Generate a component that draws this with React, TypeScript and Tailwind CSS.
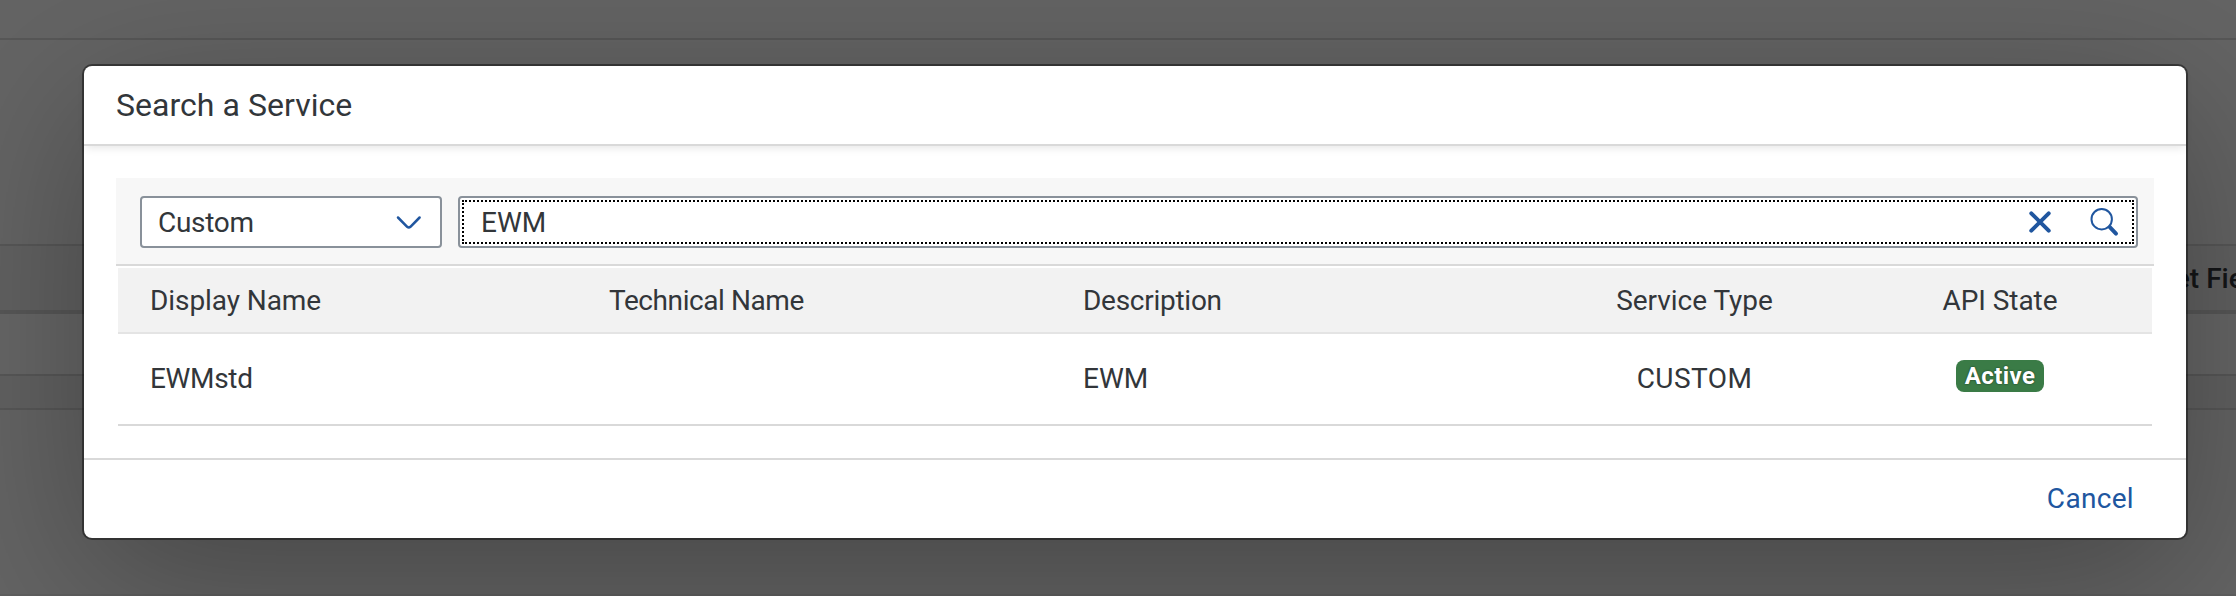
import React from "react";

function ChevronDown() {
  return (
    <svg width="28" height="20" viewBox="0 0 28 20" fill="none" stroke="#20569f" strokeWidth="2.5" strokeLinecap="round" strokeLinejoin="round">
      <path d="M3 5.5 L12.2 14.8 Q13.8 16.2 15.4 14.8 L24.6 5.5" />
    </svg>
  );
}

function ClearIcon() {
  return (
    <svg width="24" height="24" viewBox="0 0 24 24" fill="none" stroke="#20569f" strokeWidth="4" strokeLinecap="round">
      <path d="M3.3 3.3 L20.7 20.7 M20.7 3.3 L3.3 20.7" />
    </svg>
  );
}

function SearchIcon() {
  return (
    <svg width="32" height="32" viewBox="0 0 32 32" fill="none" stroke="#20569f" strokeLinecap="round">
      <circle cx="13.7" cy="13.2" r="10.2" strokeWidth="2" />
      <path d="M21.8 21.2 L28 27.6" strokeWidth="4" />
    </svg>
  );
}

function PageBehind() {
  return (
    <div className="flex h-full flex-col bg-[#fafafa]">
      <div className="h-10 border-b-2 border-[#d9d9d9]" />
      <div className="h-[206px] border-b-2 border-[#d9d9d9]" />
      <div className="flex h-[68px] items-start justify-end border-b-4 border-[#d9d9d9] bg-[#f2f2f2]">
        <div className="w-[117px] text-[28px] font-medium leading-[65px] whitespace-nowrap text-[#32363a]">
          Target Field
        </div>
      </div>
      <div className="h-[62px] border-b-2 border-[#d9d9d9] bg-white" />
      <div className="h-[34px] border-b-2 border-[#d9d9d9] bg-[#f2f2f2]" />
      <div className="h-[186px] border-b-2 border-[#ededed]" />
    </div>
  );
}

const grid = "grid grid-cols-[459px_474px_490px_307px_304px] whitespace-nowrap";

export default function App() {
  return (
    <div className="relative h-[596px] w-[2236px] overflow-hidden font-['Roboto',sans-serif] text-[28px] text-[#32363a]">
      <PageBehind />
      <div className="absolute inset-0 bg-black/60 pl-[84px] pt-[66px]">
        <section
          role="dialog"
          className="flex h-[472px] w-[2102px] flex-col rounded-lg bg-white shadow-[0_0_0_2px_rgba(0,0,0,0.42),0_40px_160px_0_rgba(0,0,0,0.3)]"
        >
          <header className="h-20 rounded-t-lg border-b-2 border-[#d9d9d9] pl-8 text-[32px] leading-[78px] tracking-[0.04px] shadow-[0_4px_8px_-2px_rgba(0,0,0,0.1)]">
            Search a Service
          </header>

          <div className="flex-1 px-8 pt-8">
            <div className="flex h-[88px] w-[2038px] gap-4 border-b-2 border-[#d9d9d9] bg-[#f7f7f7] py-[18px] pl-6 pr-4">
              <div className="flex h-[52px] w-[302px] items-center justify-between rounded-[4px] border-2 border-[#89919a] bg-white pl-4 pr-[17px]">
                <span className="self-start leading-[49px] tracking-[-0.29px]">Custom</span>
                <ChevronDown />
              </div>
              <div className="h-[52px] w-[1680px] rounded-[4px] border-2 border-[#89919a] bg-white p-[2px]">
                <div className="flex h-full items-center justify-between border-2 border-dotted border-black pl-[17px] pr-[12px]">
                  <span className="self-start leading-[41px]">EWM</span>
                  <div className="flex items-center gap-[36px]">
                    <ClearIcon />
                    <SearchIcon />
                  </div>
                </div>
              </div>
            </div>

            <div className="mx-[2px] mt-[2px] w-[2034px]">
              <div className={`${grid} h-[66px] border-b-2 border-[#e4e4e4] bg-[#f2f2f2] leading-[65px]`}>
                <div className="pl-8 tracking-[-0.08px]">Display Name</div>
                <div className="pl-8 tracking-[-0.42px]">Technical Name</div>
                <div className="pl-8 tracking-[-0.27px]">Description</div>
                <div className="text-center tracking-[-0.03px]">Service Type</div>
                <div className="text-center tracking-[-0.06px]">API State</div>
              </div>
              <div className={`${grid} h-[92px] border-b-2 border-[#d9d9d9] leading-[89px]`}>
                <div className="pl-8 tracking-[-0.32px]">EWMstd</div>
                <div className="pl-8" />
                <div className="pl-8">EWM</div>
                <div className="text-center tracking-[0.44px]">CUSTOM</div>
                <div className="flex justify-center pt-[26px]">
                  <span className="h-8 w-[88px] rounded-lg bg-[#3a7b46] text-center text-[24px] font-bold leading-8 tracking-[0.44px] text-white [text-shadow:0_0_2px_rgba(0,0,0,0.6)]">
                    Active
                  </span>
                </div>
              </div>
            </div>
          </div>

          <footer className="flex h-20 items-start justify-end border-t-2 border-[#d9d9d9] pr-[52px]">
            <button className="leading-[77px] tracking-[0.32px] text-[#20569f]">Cancel</button>
          </footer>
        </section>
      </div>
    </div>
  );
}
